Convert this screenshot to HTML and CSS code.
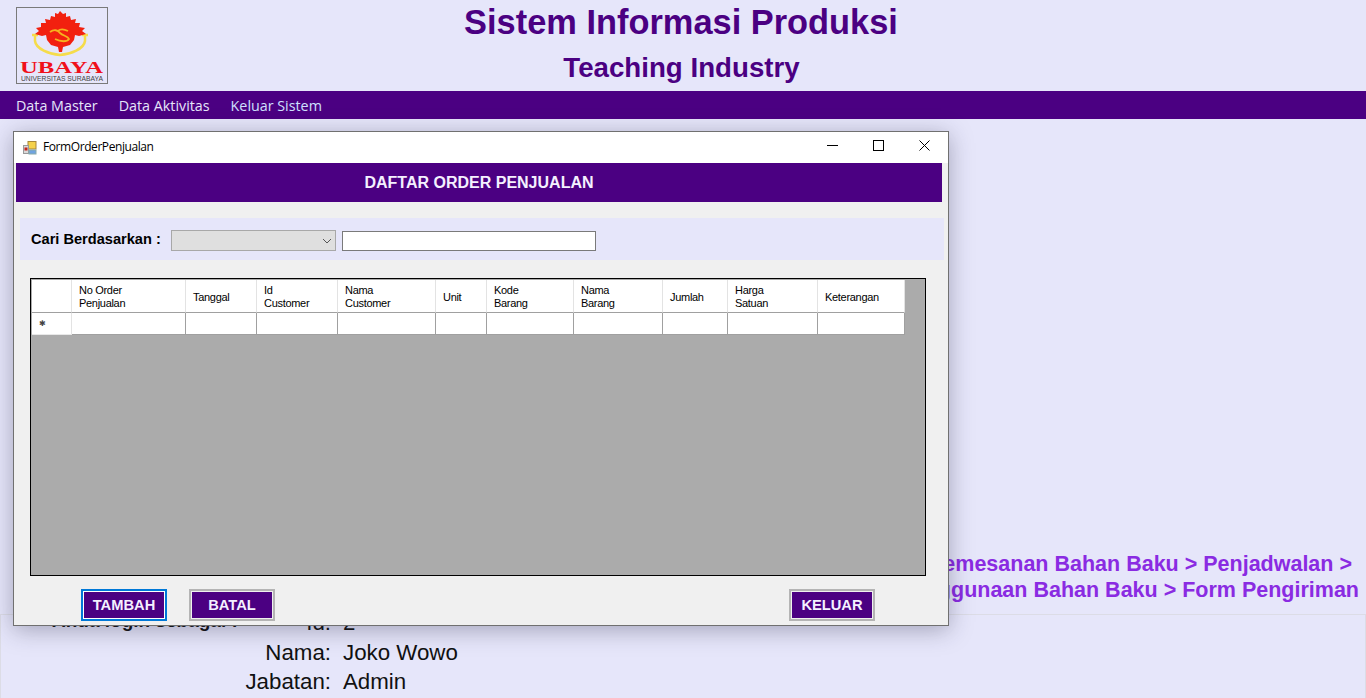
FILE: index.html
```html
<!DOCTYPE html>
<html lang="id">
<head>
<meta charset="utf-8">
<title>Sistem Informasi Produksi</title>
<link rel="stylesheet" href="styles.css">
</head>
<body>
<div class="page">
  <header class="top">
    <div class="logo">
      <svg width="90" height="75" viewBox="0 0 90 75">
        <path class="gold-arc" d="M15 27 H21 M18 27 V33 C19 41 32 46 43 47 C54 46 67 41 68 33 V27 M65 27 H71"/>
        <path class="red" d="M43 3 L46 6 L49 5 L49 9 L53 8 L54 12 L59 11 L58 15 L63 15 L62 19 L68 20 L65 23 L69 26 L62 28 L58 27 L57 32 L53 37 L46 39 L45 44 L42 44 L41 39 L34 37 L30 32 L29 27 L25 28 L18 26 L22 23 L19 20 L24 19 L24 15 L29 15 L28 11 L33 12 L34 8 L38 9 L38 5 L41 6 Z"/>
        <path class="gold-line" d="M33 24 C37 21 41 22 43 25 C46 28 51 28 52 31 C50 34 44 34 38 31 M51 23 C47 21 43 21 41 23"/>
        <text class="logo-name" x="3" y="65" textLength="83" lengthAdjust="spacingAndGlyphs">UBAYA</text>
        <text class="logo-sub" x="4" y="73" textLength="82" lengthAdjust="spacingAndGlyphs">UNIVERSITAS SURABAYA</text>
      </svg>
    </div>
    <div class="titles">
      <h1>Sistem Informasi Produksi</h1>
      <h2>Teaching Industry</h2>
    </div>
  </header>
  <nav class="menu">
    <a>Data Master</a>
    <a>Data Aktivitas</a>
    <a class="active">Keluar Sistem</a>
  </nav>
  <main class="content">
    <p class="crumb">Pemesanan Bahan Baku &gt; Penjadwalan &gt;</p>
    <p class="crumb crumb-last">Penggunaan Bahan Baku &gt; Form Pengiriman</p>
  </main>
  <footer class="login">
    <div class="login-head">Anda login sebagai :</div>
    <dl class="login-data">
      <dt>Id:</dt><dd>2</dd>
      <dt>Nama:</dt><dd>Joko Wowo</dd>
      <dt>Jabatan:</dt><dd>Admin</dd>
    </dl>
  </footer>
</div>

<section class="window">
  <div class="titlebar">
    <svg class="app-icon" width="14" height="14" viewBox="0 0 14 14">
      <rect x="5" y="0.5" width="8" height="7.5" fill="#f5d24a" stroke="#a8873a"/>
      <rect x="0.5" y="4.5" width="5" height="8" fill="#d9d9d9" stroke="#999"/>
      <rect x="1.5" y="6.5" width="3" height="3" fill="#c4261d"/>
      <rect x="6" y="9" width="7" height="4" fill="#6fa3e0" stroke="#8aa"/>
    </svg>
    <span class="wintitle">FormOrderPenjualan</span>
    <div class="controls">
      <svg width="11" height="11" viewBox="0 0 11 11"><path d="M0 5.5H11" stroke="#000"/></svg>
      <svg width="11" height="11" viewBox="0 0 11 11"><rect x="0.5" y="0.5" width="10" height="10" fill="none" stroke="#000"/></svg>
      <svg width="11" height="11" viewBox="0 0 11 11"><path d="M0.5 0.5L10.5 10.5M10.5 0.5L0.5 10.5" stroke="#000" fill="none"/></svg>
    </div>
  </div>
  <div class="banner">DAFTAR ORDER PENJUALAN</div>
  <div class="search">
    <label class="search-label">Cari Berdasarkan :</label>
    <div class="combo">
      <svg width="10" height="6" viewBox="0 0 10 6"><path d="M1 1L5 5L9 1" fill="none" stroke="#555"/></svg>
    </div>
    <div class="textbox"></div>
  </div>
  <div class="grid">
    <div class="table">
      <div class="th"></div>
      <div class="th">No Order<br>Penjualan</div>
      <div class="th">Tanggal</div>
      <div class="th">Id<br>Customer</div>
      <div class="th">Nama<br>Customer</div>
      <div class="th">Unit</div>
      <div class="th">Kode<br>Barang</div>
      <div class="th">Nama<br>Barang</div>
      <div class="th">Jumlah</div>
      <div class="th">Harga<br>Satuan</div>
      <div class="th">Keterangan</div>
      <div class="td rowhead">✱</div>
      <div class="td"></div><div class="td"></div><div class="td"></div><div class="td"></div><div class="td"></div>
      <div class="td"></div><div class="td"></div><div class="td"></div><div class="td"></div><div class="td"></div>
    </div>
  </div>
  <div class="actions">
    <button class="btn btn-focus">TAMBAH</button>
    <button class="btn">BATAL</button>
    <button class="btn btn-end">KELUAR</button>
  </div>
</section>
</body>
</html>
```
FILE: styles.css
```css
* { box-sizing: border-box; }
html, body { margin: 0; height: 100%; }
body {
  background: #e6e6fa;
  font-family: "Liberation Sans", Arial, sans-serif;
  overflow: hidden;
}
.page { display: flex; flex-direction: column; height: 698px; }

.top {
  height: 91px;
  display: grid;
  grid-template-columns: 92px 1fr 92px;
  padding: 7px 20px 0 16px;
}
.logo {
  width: 92px;
  height: 77px;
  border: 1px solid #7a7a7a;
}
.logo svg { display: block; }
.red { fill: #f2200f; }
.gold-arc { fill: none; stroke: #f5dc4a; stroke-width: 2.5; }
.gold-line { fill: none; stroke: #f6b21e; stroke-width: 1.8; }
.logo-name { font-family: "Liberation Serif", serif; font-weight: 700; font-size: 16px; fill: #f0101a; }
.logo-sub { font-size: 6.5px; fill: #444; }
.titles { text-align: center; color: #4b0082; grid-column: 2; margin-top: -7px; }
h1 { margin: 2px 0 0; font-size: 34.4px; line-height: 40px; font-weight: 700; }
h2 { margin: 8px 0 0 1px; font-size: 27.7px; line-height: 36px; font-weight: 700; }

.menu {
  height: 28px;
  background: #4b0082;
  display: flex;
  align-items: center;
  gap: 21px;
  padding-left: 16px;
  font-family: "Open Sans", sans-serif;
  font-size: 14.3px;
  color: #e6e6fa;
}
.menu .active { color: #cfe0ff; }

.content {
  flex: 1;
  display: flex;
  flex-direction: column;
  justify-content: flex-end;
  padding: 0 7px 11px 0;
  text-align: right;
}
.crumb {
  margin: 0;
  font-size: 21.5px;
  line-height: 26px;
  font-weight: 700;
  color: #8a2be2;
  padding-right: 7px;
}
.crumb-last { padding-right: 0; }

.login {
  height: 84px;
  border: 1px solid #dcdce6;
  border-bottom: 0;
  display: flex;
  padding-left: 51px;
}
.login-head { font-size: 19px; font-weight: 700; width: 190px; line-height: 24px; color: #111; white-space: nowrap; margin-top: -6px; }
.login-data {
  margin: -7px 0 0;
  display: grid;
  grid-template-columns: 89px auto;
  column-gap: 12px;
  grid-auto-rows: 29.5px;
  align-content: start;
  font-size: 22.3px;
  color: #111;
  line-height: 29.5px;
}
.login-data dt { text-align: right; }
.login-data dd { margin: 0; }

.window {
  position: absolute;
  left: 13px;
  top: 131px;
  width: 936px;
  height: 495px;
  background: #f0f0f0;
  border: 1px solid #707070;
  box-shadow: 0 4px 22px rgba(40, 40, 70, 0.35);
}
.titlebar {
  height: 31px;
  background: #fff;
  display: flex;
  align-items: center;
  padding-left: 9px;
  gap: 6px;
}
.app-icon { flex: none; }
.wintitle { font-family: "Open Sans", sans-serif; font-size: 12px; color: #000; letter-spacing: -0.42px; margin-top: -2px; }
.controls { margin-left: auto; display: flex; gap: 35px; padding-right: 18px; margin-top: -4px; }
.controls svg { display: block; }

.banner {
  margin-left: 2px;
  width: 926px;
  height: 39px;
  background: #4b0082;
  color: #f4f0ff;
  font-size: 16px;
  font-weight: 700;
  display: flex;
  align-items: center;
  justify-content: center;
}
.search {
  margin: 16px 0 0 6px;
  width: 924px;
  height: 42px;
  background: #e6e6fa;
  display: flex;
  align-items: flex-start;
  padding: 12px 0 0 11px;
}
.search-label { width: 140px; font-size: 14.6px; line-height: 18px; font-weight: 700; color: #000; }
.combo {
  width: 165px;
  height: 21px;
  background: #dfdfdf;
  border: 1px solid #a8a8a8;
  display: flex;
  align-items: center;
  justify-content: flex-end;
  padding-right: 3px;
}
.textbox {
  width: 254px;
  height: 20px;
  margin: 1px 0 0 6px;
  background: #fff;
  border: 1px solid #7a7a7a;
}
.grid {
  margin: 18px 0 0 16px;
  width: 896px;
  height: 298px;
  background: #ababab;
  border: 1px solid #000;
  padding: 1px 0 0 1px;
}
.table {
  display: grid;
  width: 873px;
  grid-template-columns: 40px 114px 71px 81px 98px 51px 87px 89px 65px 90px 87px;
  grid-template-rows: 33px 22px;
  background: #fff;
}
.th {
  display: flex;
  align-items: center;
  padding: 2px 0 0 7px;
  font-size: 11px;
  line-height: 13px;
  letter-spacing: -0.3px;
  color: #000;
  background: #fff;
  border-right: 1px solid #e3e3e3;
  border-bottom: 1px solid #a0a0a0;
}
.td {
  background: #fff;
  border-right: 1px solid #a0a0a0;
  border-bottom: 1px solid #a0a0a0;
}
.rowhead {
  border-color: #e3e3e3;
  border-bottom-color: #e8e8e8;
  display: flex;
  align-items: center;
  padding: 0 0 0 7px;
  font-family: "DejaVu Sans", sans-serif;
  font-size: 8px;
  color: #444;
}
.actions {
  display: flex;
  margin: 13px 0 0 67px;
  width: 794px;
  gap: 22px;
}
.btn {
  width: 86px;
  height: 32px;
  padding: 1px;
  border: 2px solid #b4b4b4;
  background: #4b0082 content-box;
  color: #f4f0ff;
  font: 700 14.7px "Liberation Sans", Arial, sans-serif;
}
.btn-focus { border-color: #0078d7; background: #4b0082 content-box; box-shadow: inset 0 0 0 1px #fff; }
.btn-end { margin-left: auto; }
```
